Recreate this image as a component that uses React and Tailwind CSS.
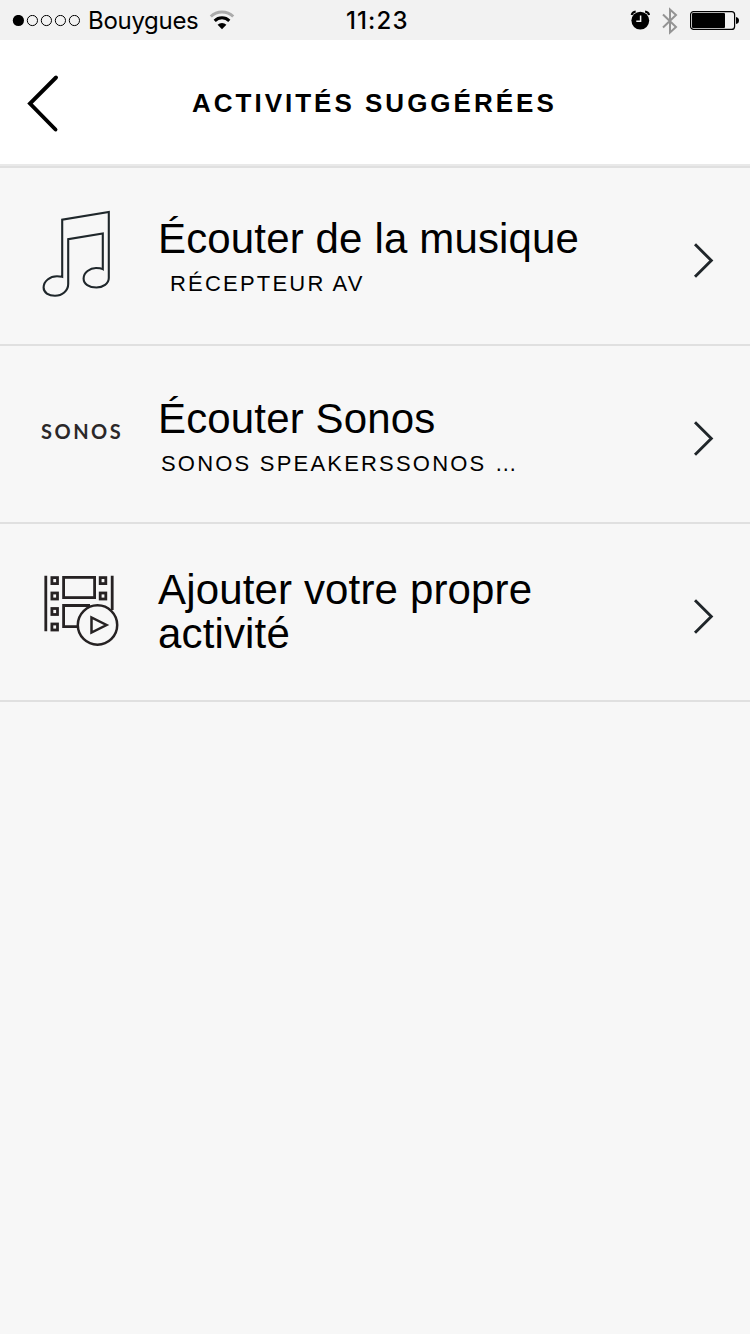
const activities = [
  {
    id: "music",
    title: "Écouter de la musique",
    devices: "RÉCEPTEUR AV",
    icon: <MusicIcon />,
    pad: "pt-[49px]",
    sub: "pl-[12px]",
  },
  {
    id: "sonos",
    title: "Écouter Sonos",
    devices: "SONOS SPEAKERSSONOS …",
    icon: <SonosLogo />,
    pad: "pt-[51px]",
    sub: "pl-[3px]",
  },
  {
    id: "custom",
    title: "Ajouter votre propre activité",
    icon: <FilmIcon />,
    pad: "pt-[44px]",
  },
];

/* ---------------- ICONS ---------------- */
function MusicIcon() {
  return (
    <svg className="mt-8" width="100" height="110" viewBox="0 0 100 110" fill="none" stroke="#1f272b">
      <path
        d="M32.2 76V19.6L78.8 12V78C78.8 83.5 73 87.5 66.500 87.500C59 87.500 53.600 84 53.600 78.500C53.600 72.500 60 68 66 68C69 68 71.500 68.500 72.800 69.200V33.500L38.200 39.200V84C38.200 91 32 95.800 25 95.800C18.500 95.800 13.600 92.500 13.600 87.500C13.600 81 20 76.300 27 76.300C29.500 76.300 31 76.300 32.200 76.700Z"
        strokeWidth="2.1"
      />
    </svg>
  );
}

function SonosLogo() {
  return (
    <span className="pt-[73px] pl-[11px] font-['Lato',sans-serif] text-[20px] leading-[24px] font-bold tracking-[2.5px] text-[#2b2829]">
      SONOS
    </span>
  );
}

function FilmIcon() {
  return (
    <svg
      className="mt-[36px]"
      width="100"
      height="100"
      viewBox="0 0 100 100"
      fill="none"
      stroke="#262223"
      strokeWidth="2.8"
    >
      <path d="M15.800 15.700V71.300M82.200 15.700V50" />
      <rect x="21.900" y="17.600" width="5.600" height="6" />
      <rect x="21.900" y="33" width="5.600" height="6" />
      <rect x="21.900" y="48.500" width="5.600" height="6" />
      <rect x="21.900" y="64" width="5.600" height="6" />
      <rect x="70.200" y="17.600" width="5.600" height="6" />
      <rect x="70.200" y="33" width="5.600" height="6" />
      <rect x="33.600" y="17.400" width="31" height="20.200" />
      <path d="M60 45.500H33.600V66.600H48" />
      <circle cx="67.500" cy="65" r="19.700" fill="#f7f7f7" strokeWidth="2.500" />
      <path d="M61.500 57.500V72.500L76.500 65Z" strokeWidth="2.500" />
    </svg>
  );
}

function SignalDots() {
  return (
    <svg width="68" height="12" viewBox="0 0 68 12" fill="none" stroke="#000">
      <circle cx="6.400" cy="5.500" r="5.600" fill="#000" stroke="none" />
      <circle cx="20.400" cy="5.500" r="5.100" />
      <circle cx="34.400" cy="5.500" r="5.100" />
      <circle cx="48.400" cy="5.500" r="5.100" />
      <circle cx="62.400" cy="5.500" r="5.100" />
    </svg>
  );
}

function WifiIcon() {
  return (
    <svg width="26" height="20" viewBox="0 0 26 20" fill="none" strokeWidth="3">
      <path d="M1.800 6.500A16 16 0 0 1 24.200 6.500" stroke="#ababab" />
      <path d="M5.700 10.900A10.300 10.300 0 0 1 20.300 10.900" stroke="#000" />
      <path d="M8.600 14.800A6.200 6.200 0 0 1 17.400 14.800L13 19.200Z" fill="#000" />
    </svg>
  );
}

function AlarmIcon() {
  return (
    <svg width="20" height="20" viewBox="0 0 20 20" fill="none">
      <circle cx="10.300" cy="10.600" r="8.900" fill="#000" />
      <path d="M10.600 5.500V11.200H6.300" stroke="#f2f2f2" strokeWidth="1.500" />
      <path d="M1.600 5Q2.400 2 5.700 1.500M19.200 5Q18.400 2 15.100 1.500" stroke="#000" strokeWidth="1.900" />
    </svg>
  );
}

function BluetoothIcon() {
  return (
    <svg width="16" height="28" viewBox="0 0 16 28" fill="none" stroke="#949494" strokeWidth="2">
      <path d="M1 7.500L14 20L8 25.500V2.500L14 8L1 20.500" />
    </svg>
  );
}

function BatteryIcon() {
  return (
    <svg width="50" height="20" viewBox="0 0 50 20" fill="none">
      <rect x="0.600" y="1.600" width="44" height="17.800" rx="3" stroke="#000" strokeWidth="1.200" />
      <rect x="2" y="3" width="33" height="15" rx="1" fill="#000" />
      <path d="M46 7Q49 7.500 49 10.500T46 14Z" fill="#000" />
    </svg>
  );
}

function Chevron() {
  return (
    <svg width="24" height="40" viewBox="0 0 24 40" fill="none">
      <path d="M4 4.300L20.300 20.500L4 36.700" stroke="#20262a" strokeWidth="2.900" />
    </svg>
  );
}

/* ---------------- SCREEN ---------------- */
export default function App() {
  return (
    <div className="min-h-[1334px] w-[750px] bg-[#f7f7f7] font-['Liberation_Sans',Arial,sans-serif] text-black">
      {/* STATUS BAR */}
      <div className="flex h-10 items-start bg-[#f2f2f2] font-['Inter',sans-serif]">
        <div className="flex w-[346px] items-start pl-3">
          <div className="pt-[15px]">
            <SignalDots />
          </div>
          <span className="ml-2 w-[111px] pt-[6px] text-[24px] leading-[30px] tracking-[-0.3px]">
            Bouygues
          </span>
          <div className="ml-[10px] pt-[10px]">
            <WifiIcon />
          </div>
        </div>
        <span className="w-[284px] pt-[6px] text-[24px] leading-[30px] font-medium tracking-[1.1px]">
          11:23
        </span>
        <div className="pt-[10px]">
          <AlarmIcon />
        </div>
        <div className="ml-3 pt-[7px]">
          <BluetoothIcon />
        </div>
        <div className="ml-3 pt-[10px]">
          <BatteryIcon />
        </div>
      </div>

      {/* HEADER */}
      <header className="flex h-32 items-start border-b-2 border-[#e0e0e0] bg-white">
        <div className="flex h-[126px] w-full items-start border-b-2 border-[#e9e9e9]">
          <button className="pt-[32px] pl-6">
            <svg width="40" height="62" viewBox="0 0 40 62" fill="none">
              <path d="M32 5.500L6 31.500L31.500 57.500" stroke="#000" strokeWidth="3.900" strokeLinecap="round" />
            </svg>
          </button>
          <h1 className="ml-[128px] pt-[48px] text-[26px] leading-[30px] font-bold tracking-[3px] whitespace-nowrap">
            ACTIVITÉS SUGGÉRÉES
          </h1>
        </div>
      </header>

      {/* ACTIVITIES */}
      <ul>
        {activities.map((a) => (
          <li key={a.id} className="flex h-[178px] border-b-2 border-[#e0e0e0]">
            <div className="ml-[30px] flex w-32 shrink-0 items-start">{a.icon}</div>
            <div className={`w-[460px] ${a.pad}`}>
              <h2 className="text-[42px] leading-[44px] tracking-[0.15px]">{a.title}</h2>
              {a.devices && (
                <p className={`mt-[10px] text-[22px] leading-[26px] tracking-[2.2px] ${a.sub}`}>
                  {a.devices}
                </p>
              )}
            </div>
            <div className="ml-[73px] pt-[72px]">
              <Chevron />
            </div>
          </li>
        ))}
      </ul>
    </div>
  );
}
